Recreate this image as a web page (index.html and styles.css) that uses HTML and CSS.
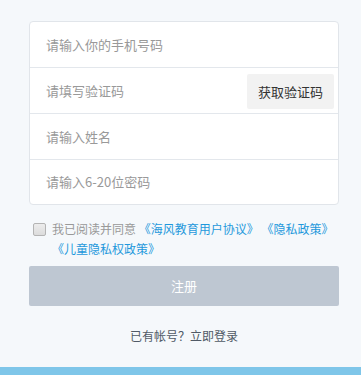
FILE: index.html
```html
<!DOCTYPE html>
<html lang="zh-CN">
<head>
<meta charset="utf-8">
<title>注册</title>
<link rel="stylesheet" href="styles.css">
</head>
<body>
<div class="page">
  <div class="form">
    <div class="card">
      <div class="row"><span class="ph">请输入你的手机号码</span></div>
      <div class="row"><span class="ph">请填写验证码</span><span class="code-btn">获取验证码</span></div>
      <div class="row"><span class="ph">请输入姓名</span></div>
      <div class="row"><span class="ph">请输入6-20位密码</span></div>
    </div>
    <div class="agree">
      <span class="check"></span>
      <p class="agree-text">我已阅读并同意 <a class="link">《海风教育用户协议》</a> <a class="link">《隐私政策》</a> <a class="link">《儿童隐私权政策》</a></p>
    </div>
    <div class="submit">注册</div>
    <div class="login">已有帐号？立即登录</div>
  </div>
</div>
<div class="bar"></div>
</body>
</html>
```

FILE: styles.css
```css
html, body {
  margin: 0;
  padding: 0;
}
body {
  width: 361px;
  height: 375px;
  overflow: hidden;
  background: #f5f8fb;
  font-family: "Noto Sans CJK SC", "Noto Sans", sans-serif;
}
.page {
  height: 367px;
  background: #f5f8fb;
  box-sizing: border-box;
  padding: 21px 0 0 29px;
}
.form {
  width: 310px;
}
.card {
  background: #fff;
  border: 1px solid #e1e5ea;
  border-radius: 4px;
}
.row {
  height: 45px;
  display: flex;
  align-items: center;
  justify-content: space-between;
  padding: 0 4px 0 16px;
  border-top: 1px solid #e3e7ec;
}
.row:first-child {
  border-top: none;
}
.row:last-child {
  height: 44px;
}
.ph {
  font-size: 13px;
  color: #999;
  line-height: 20px;
}
.code-btn {
  height: 35px;
  line-height: 35px;
  padding: 0 11px;
  margin-top: 2px;
  background: #f2f2f2;
  color: #333;
  font-size: 13px;
  border-radius: 2px;
}
.agree {
  display: flex;
  align-items: flex-start;
  margin-top: 14px;
  padding-left: 4px;
  width: 315px;
}
.check {
  flex: none;
  width: 11px;
  height: 11px;
  margin-top: 4px;
  border: 1px solid #b4b4b4;
  border-radius: 2px;
  background: linear-gradient(#ececec, #dcdcdc);
}
.agree-text {
  margin: 0 0 0 6px;
  font-size: 12px;
  line-height: 20px;
  color: #999;
}
.link {
  color: #1f98dc;
  white-space: nowrap;
}
.submit {
  margin-top: 7px;
  height: 40px;
  line-height: 40px;
  background: #bec7d2;
  color: #fff;
  text-align: center;
  font-size: 13px;
  border-radius: 2px;
}
.login {
  margin-top: 20px;
  text-align: center;
  font-size: 12px;
  line-height: 20px;
  color: #505a66;
}
.bar {
  height: 8px;
  background: #7fc6e9;
}
```
